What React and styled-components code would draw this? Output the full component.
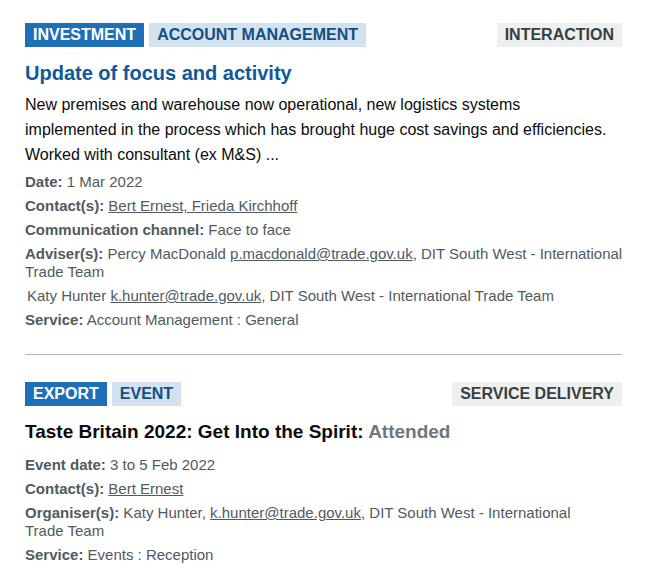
import React from 'react'
import styled, { createGlobalStyle } from 'styled-components'

const GlobalStyle = createGlobalStyle`
    body {
        margin: 0;
        background: #ffffff;
        font-family: 'Liberation Sans', Arial, sans-serif;
    }
`

const Page = styled.div`
    width: 597px;
    padding: 23px 24px 0 25px;
`

const Card = styled.div`
    display: flex;
    flex-direction: column;
`

const TagRow = styled.div`
    display: flex;
    align-items: center;
    gap: 5px;
`

const tagColours = {
    dark: { bg: '#1d70b8', fg: '#ffffff' },
    light: { bg: '#d2e2f1', fg: '#144e81' },
    grey: { bg: '#eeefef', fg: '#383f43' },
}

const Tag = styled.span`
    display: inline-block;
    height: 24px;
    line-height: 24px;
    padding: 0 8px;
    font-size: 16px;
    font-weight: 700;
    text-transform: uppercase;
    background: ${(props) => tagColours[props.kind].bg};
    color: ${(props) => tagColours[props.kind].fg};
    margin-left: ${(props) => (props.right ? 'auto' : '0')};
`

const Title = styled.h3`
    margin: 14px 0 0;
    font-size: ${(props) => props.size || 20}px;
    line-height: 24px;
    font-weight: 700;
    color: ${(props) => props.color || '#0b0c0c'};
`

const Muted = styled.span`
    color: #6f777b;
`

const Description = styled.p`
    margin: 7px 0 0;
    max-width: 586px;
    font-size: 16px;
    line-height: 25px;
    color: #0b0c0c;
`

const MetaList = styled.div`
    margin-top: ${(props) => props.top || 6}px;
    width: ${(props) => props.width || 597}px;
`

const Meta = styled.div`
    font-size: 15px;
    line-height: 18px;
    color: #505a5f;
    margin-bottom: 6px;
    padding-left: ${(props) => (props.indent ? '2px' : '0')};
`

const Label = styled.span`
    font-weight: 700;
`

const Link = styled.a`
    color: #505a5f;
    text-decoration: underline;
`

const Divider = styled.hr`
    border: 0;
    border-top: 1px solid #b1b4b6;
    margin: 19px 0 27px;
`

const App = () => (
    <Page>
        <GlobalStyle />
        <Card>
            <TagRow>
                <Tag kind="dark">Investment</Tag>
                <Tag kind="light">Account management</Tag>
                <Tag kind="grey" right>Interaction</Tag>
            </TagRow>
            <Title color="#0f589b">Update of focus and activity</Title>
            <Description>
                New premises and warehouse now operational, new logistics systems implemented in the
                process which has brought huge cost savings and efficiencies. Worked with consultant
                (ex M&amp;S) ...
            </Description>
            <MetaList width={603}>
                <Meta><Label>Date:</Label> 1 Mar 2022</Meta>
                <Meta><Label>Contact(s):</Label> <Link href="#">Bert Ernest, Frieda Kirchhoff</Link></Meta>
                <Meta><Label>Communication channel:</Label> Face to face</Meta>
                <Meta>
                    <Label>Adviser(s):</Label> Percy MacDonald <Link href="#">p.macdonald@trade.gov.uk</Link>,
                    DIT South West - International Trade Team
                </Meta>
                <Meta indent>
                    Katy Hunter <Link href="#">k.hunter@trade.gov.uk</Link>, DIT South West - International Trade Team
                </Meta>
                <Meta><Label>Service:</Label> Account Management : General</Meta>
            </MetaList>
        </Card>
        <Divider />
        <Card>
            <TagRow>
                <Tag kind="dark">Export</Tag>
                <Tag kind="light">Event</Tag>
                <Tag kind="grey" right>Service delivery</Tag>
            </TagRow>
            <Title size={19}>
                Taste Britain 2022: Get Into the Spirit: <Muted>Attended</Muted>
            </Title>
            <MetaList top={12} width={560}>
                <Meta><Label>Event date:</Label> 3 to 5 Feb 2022</Meta>
                <Meta><Label>Contact(s):</Label> <Link href="#">Bert Ernest</Link></Meta>
                <Meta>
                    <Label>Organiser(s):</Label> Katy Hunter, <Link href="#">k.hunter@trade.gov.uk</Link>,
                    DIT South West - International Trade Team
                </Meta>
                <Meta><Label>Service:</Label> Events : Reception</Meta>
            </MetaList>
        </Card>
    </Page>
)

export default App
